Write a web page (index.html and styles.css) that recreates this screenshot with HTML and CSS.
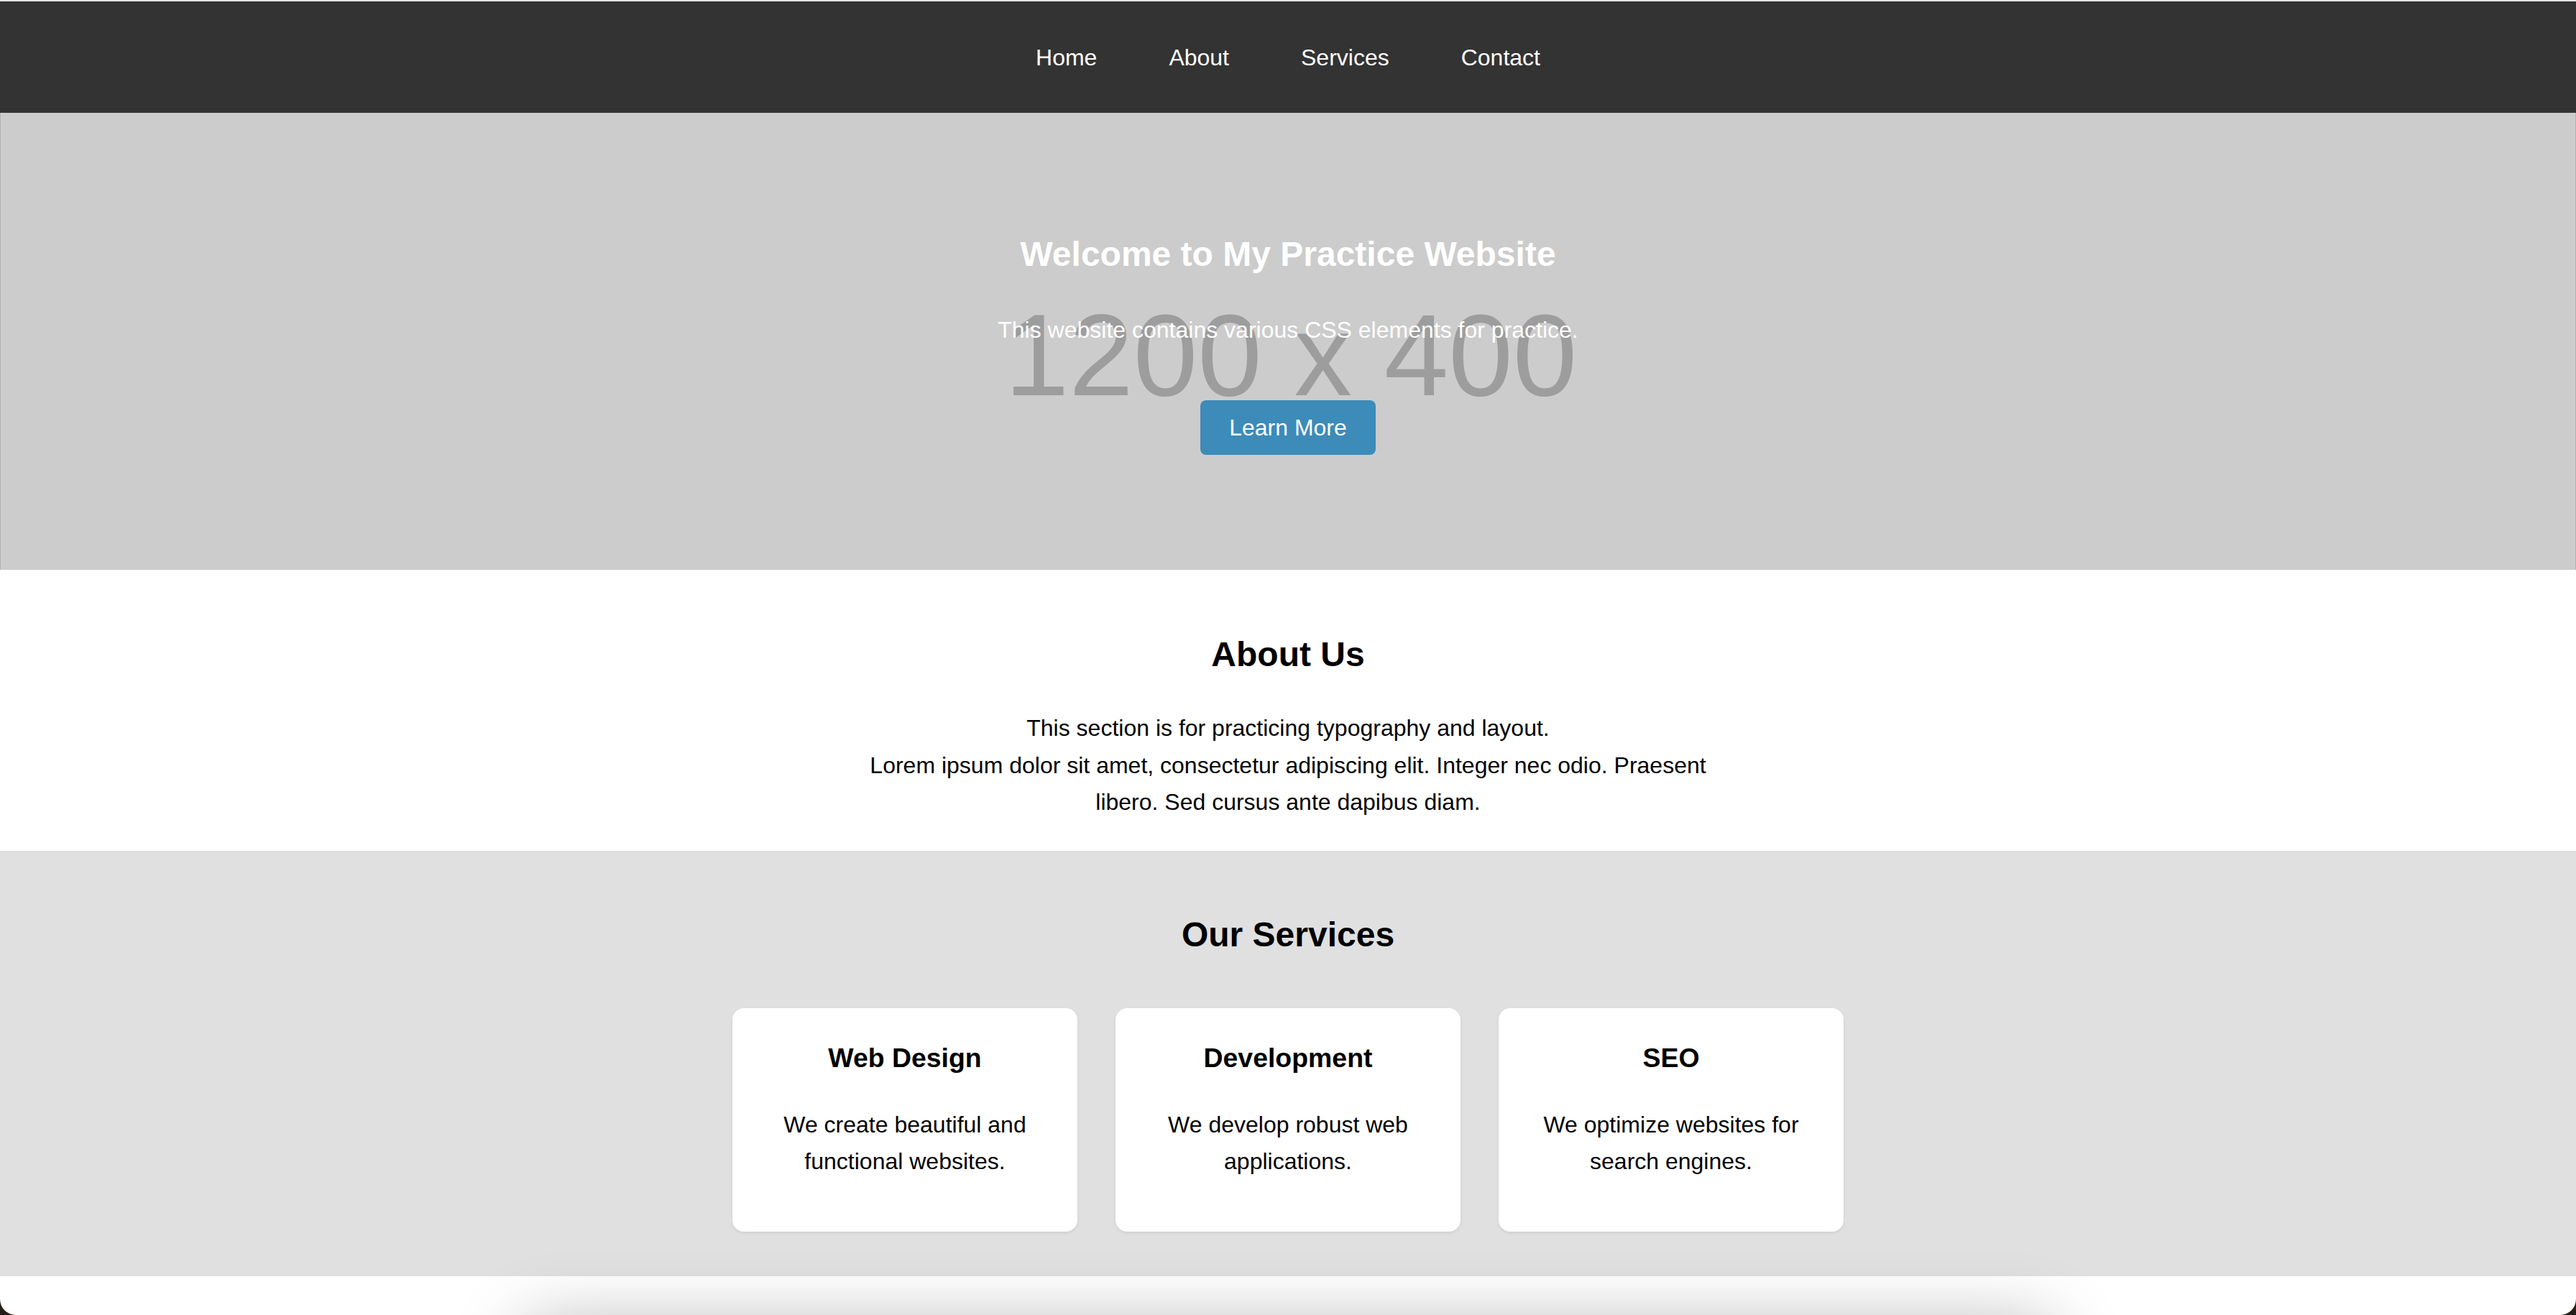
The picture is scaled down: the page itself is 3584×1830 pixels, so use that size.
FILE: index.html
```html
<!DOCTYPE html>
<html lang="en">
<head>
<meta charset="utf-8">
<title>My Practice Website</title>
<link rel="stylesheet" href="styles.css">
</head>
<body>
  <nav class="topnav">
    <a class="nav-link" href="#home">Home</a>
    <a class="nav-link" href="#about">About</a>
    <a class="nav-link" href="#services">Services</a>
    <a class="nav-link" href="#contact">Contact</a>
  </nav>

  <header class="hero" id="home">
    <div class="hero-placeholder" aria-hidden="true">1200 x 400</div>
    <div class="hero-content">
      <h1 class="hero-title">Welcome to My Practice Website</h1>
      <p class="hero-text">This website contains various CSS elements for practice.</p>
      <a class="btn" href="#about">Learn More</a>
    </div>
  </header>

  <section class="about" id="about">
    <h2 class="section-title">About Us</h2>
    <p class="about-text">This section is for practicing typography and layout.<br>Lorem ipsum dolor sit amet, consectetur adipiscing elit. Integer nec odio. Praesent libero. Sed cursus ante dapibus diam.</p>
  </section>

  <section class="services" id="services">
    <h2 class="section-title">Our Services</h2>
    <div class="cards">
      <div class="card">
        <h3 class="card-title">Web Design</h3>
        <p class="card-text">We create beautiful and functional websites.</p>
      </div>
      <div class="card">
        <h3 class="card-title">Development</h3>
        <p class="card-text">We develop robust web applications.</p>
      </div>
      <div class="card">
        <h3 class="card-title">SEO</h3>
        <p class="card-text">We optimize websites for search engines.</p>
      </div>
    </div>
  </section>

  <div class="page-bottom">
    <div class="contact-box" id="contact"></div>
  </div>
</body>
</html>
```

FILE: styles.css
```css
html {
  margin: 0;
  height: 1830px;
  overflow: hidden;
  background: #231e19;
}

body {
  margin: 0;
  height: 1830px;
  box-sizing: border-box;
  overflow: hidden;
  background: #ffffff;
  border-top: 2px solid #e4e4e4;
  border-bottom-left-radius: 22px;
  border-bottom-right-radius: 22px;
  font-family: "Liberation Sans", Arial, Helvetica, sans-serif;
  color: #000;
}

/* Navigation */
.topnav {
  height: 155px;
  background: #333333;
  display: flex;
  justify-content: center;
  align-items: center;
  gap: 100px;
}

.nav-link {
  color: #ffffff;
  text-decoration: none;
  font-size: 32px;
  line-height: 36px;
}

/* Hero */
.hero {
  height: 636px;
  background: #cccccc;
  border-left: 1px solid rgba(0, 0, 0, 0.12);
  border-right: 1px solid rgba(0, 0, 0, 0.12);
  box-sizing: border-box;
  display: grid;
  grid-template-columns: 100%;
  grid-template-rows: 100%;
}

.hero-placeholder {
  grid-area: 1 / 1;
  justify-self: center;
  align-self: start;
  margin-top: 257px;
  margin-left: 8px;
  font-size: 161px;
  line-height: 161px;
  color: #9d9d9d;
  white-space: nowrap;
}

.hero-content {
  grid-area: 1 / 1;
  padding-top: 169px;
  text-align: center;
  color: #ffffff;
}

.hero-title {
  margin: 0;
  font-size: 48px;
  line-height: 56px;
  font-weight: bold;
}

.hero-text {
  margin: 59px 0 0;
  font-size: 32px;
  line-height: 36px;
}

.btn {
  display: inline-block;
  margin-top: 80px;
  padding: 20px 40px;
  font-size: 32px;
  line-height: 36px;
  color: #ffffff;
  background: #3d8bb9;
  border-radius: 8px;
  text-decoration: none;
}

/* Sections */
.section-title {
  margin: 0;
  font-size: 48px;
  line-height: 76.8px;
  font-weight: bold;
  text-align: center;
}

.about {
  padding: 80px 0 42px;
  text-align: center;
}

.about .section-title {
  margin-bottom: 38.5px;
}

.about-text {
  max-width: 1200px;
  margin: 0 auto;
  font-size: 32px;
  line-height: 51.2px;
}

.services {
  background: #e0e0e0;
  padding: 79px 0 62px;
}

.cards {
  display: flex;
  justify-content: center;
  gap: 53px;
  margin-top: 63px;
}

.card {
  width: 480px;
  box-sizing: border-box;
  padding: 40px;
  background: #ffffff;
  border-radius: 16px;
  box-shadow: 0 2px 4px rgba(0, 0, 0, 0.08);
  text-align: center;
}

.card-title {
  margin: 0 0 37.44px;
  font-size: 37.44px;
  line-height: 59.9px;
  font-weight: bold;
}

.card-text {
  margin: 0 0 32px;
  font-size: 32px;
  line-height: 51.2px;
}

.page-bottom {
  height: 54px;
  display: flex;
  flex-direction: column;
  justify-content: flex-end;
  align-items: center;
}

.contact-box {
  width: 1920px;
  height: 0;
  box-shadow: 0 115px 100px 100px rgba(0, 0, 0, 0.3);
}
```
